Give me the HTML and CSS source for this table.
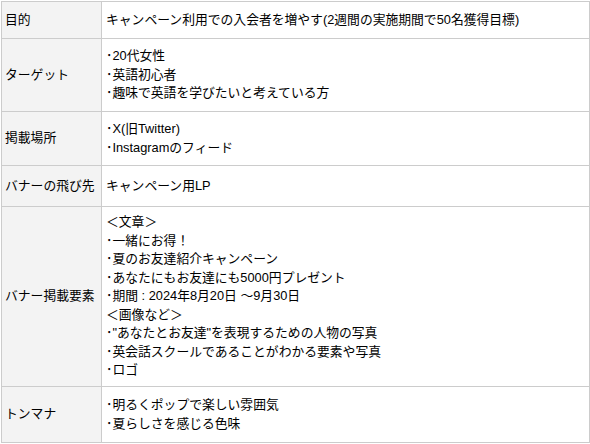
FILE: index.html
```html
<!DOCTYPE html>
<html lang="ja">
<head>
<meta charset="utf-8">
<link rel="stylesheet" href="styles.css">
</head>
<body>
<table class="brief">
  <tr class="r1">
    <th>目的</th>
    <td>キャンペーン利用での入会者を増やす(2週間の実施期間で50名獲得目標)</td>
  </tr>
  <tr class="r2">
    <th>ターゲット</th>
    <td>･20代女性<br>･英語初心者<br>･趣味で英語を学びたいと考えている方</td>
  </tr>
  <tr class="r3">
    <th>掲載場所</th>
    <td>･X(旧Twitter)<br>･Instagramのフィード</td>
  </tr>
  <tr class="r4">
    <th>バナーの飛び先</th>
    <td>キャンペーン用LP</td>
  </tr>
  <tr class="r5">
    <th>バナー掲載要素</th>
    <td>＜文章＞<br>･一緒にお得！<br>･夏のお友達紹介キャンペーン<br>･あなたにもお友達にも5000円プレゼント<br>･期間 : 2024年8月20日 ～9月30日<br>＜画像など＞<br>･"あなたとお友達"を表現するための人物の写真<br>･英会話スクールであることがわかる要素や写真<br>･ロゴ</td>
  </tr>
  <tr class="r6">
    <th>トンマナ</th>
    <td>･明るくポップで楽しい雰囲気<br>･夏らしさを感じる色味</td>
  </tr>
</table>
</body>
</html>
```

FILE: styles.css
```css
html, body {
  margin: 0;
  background: #ffffff;
}
body {
  padding: 1px 0 0 1px;
  font-family: "Liberation Sans", "Noto Sans CJK JP", sans-serif;
  font-size: 12.8px;
  color: #000;
}
.brief {
  border-collapse: collapse;
  width: 589px;
  table-layout: fixed;
}
.brief th,
.brief td {
  border: 1px solid #cccccc;
  padding: 0 4px;
  vertical-align: middle;
  text-align: left;
  font-weight: normal;
  line-height: 18.5px;
}
.brief th {
  width: 92px;
  background: #f3f3f3;
  padding-left: 3px;
  white-space: nowrap;
}
.r1 { height: 37px; }
.r2 { height: 73px; }
.r3 { height: 54px; }
.r4 { height: 41px; }
.r5 { height: 180px; }
.r6 { height: 56px; }
```
